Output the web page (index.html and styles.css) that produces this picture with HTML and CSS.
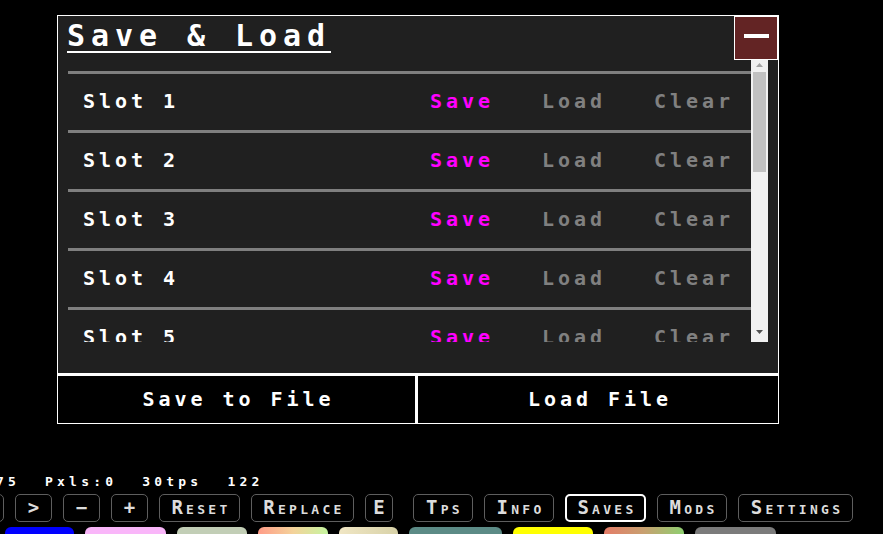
FILE: index.html
```html
<!DOCTYPE html>
<html lang="en">
<head>
    <meta charset="UTF-8">
    <meta name="viewport" content="width=device-width, initial-scale=1.0">
    <title>Save &amp; Load</title>
    <link rel="stylesheet" href="styles.css">
</head>
<body>

<div class="modal">
    <div class="modal-head">
        <h2 class="modal-title"><span>Save &amp; Load</span></h2>
        <button class="close-btn" title="Close"><span class="close-bar"></span></button>
    </div>

    <div class="slots-wrap">
        <div class="slots">
            <div class="slot"><span class="slot-name">Slot 1</span><span class="slot-save">Save</span><span class="slot-act">Load</span><span class="slot-act">Clear</span></div>
            <div class="slot"><span class="slot-name">Slot 2</span><span class="slot-save">Save</span><span class="slot-act">Load</span><span class="slot-act">Clear</span></div>
            <div class="slot"><span class="slot-name">Slot 3</span><span class="slot-save">Save</span><span class="slot-act">Load</span><span class="slot-act">Clear</span></div>
            <div class="slot"><span class="slot-name">Slot 4</span><span class="slot-save">Save</span><span class="slot-act">Load</span><span class="slot-act">Clear</span></div>
            <div class="slot"><span class="slot-name">Slot 5</span><span class="slot-save">Save</span><span class="slot-act">Load</span><span class="slot-act">Clear</span></div>
            <div class="slot"><span class="slot-name">Slot 6</span><span class="slot-save">Save</span><span class="slot-act">Load</span><span class="slot-act">Clear</span></div>
            <div class="slot"><span class="slot-name">Slot 7</span><span class="slot-save">Save</span><span class="slot-act">Load</span><span class="slot-act">Clear</span></div>
        </div>
        <div class="scrollbar">
            <div class="sb-up">
                <svg width="7" height="4" viewBox="0 0 7 4"><polygon points="0,4 3.5,0 7,4" fill="#a3a3a3"/></svg>
            </div>
            <div class="sb-thumb"></div>
            <div class="sb-down">
                <svg width="7" height="4" viewBox="0 0 7 4"><polygon points="0,0 7,0 3.5,4" fill="#505050"/></svg>
            </div>
        </div>
    </div>

    <div class="modal-foot">
        <button class="file-btn">Save to File</button>
        <button class="file-btn">Load File</button>
    </div>
</div>

<div class="stats">
    <span class="stat">75</span>
    <span class="stat">Pxls:0</span>
    <span class="stat">30tps</span>
    <span class="stat">122</span>
</div>

<div class="toolbar">
    <button class="tool-btn w-sm">&lt;</button>
    <button class="tool-btn w-sm">&gt;</button>
    <button class="tool-btn w-sm">−</button>
    <button class="tool-btn w-sm">+</button>
    <button class="tool-btn w-reset">Reset</button>
    <button class="tool-btn w-replace">Replace</button>
    <button class="tool-btn w-e">E</button>
    <button class="tool-btn w-tps">Tps</button>
    <button class="tool-btn w-info">Info</button>
    <button class="tool-btn w-saves active">Saves</button>
    <button class="tool-btn w-mods">Mods</button>
    <button class="tool-btn w-settings">Settings</button>
</div>

<div class="categories">
    <div class="cat cat-blue"></div>
    <div class="cat cat-pink"></div>
    <div class="cat cat-sage"></div>
    <div class="cat cat-warm"></div>
    <div class="cat cat-beige"></div>
    <div class="cat cat-teal"></div>
    <div class="cat cat-yellow"></div>
    <div class="cat cat-rust"></div>
    <div class="cat cat-gray"></div>
</div>

</body>
</html>
```

FILE: styles.css
```css
html, body {
    overflow: hidden;
}

body {
    margin: 0;
    background: #000;
    color: #fff;
    font-family: 'DejaVu Sans Mono', 'Liberation Mono', monospace;
    font-weight: bold;
}

button {
    font-family: inherit;
    font-weight: bold;
    background: none;
    border: none;
    padding: 0;
    margin: 0;
    cursor: pointer;
}

/* save / load panel */
.modal {
    box-sizing: border-box;
    width: 722px;
    height: 409px;
    margin: 15px 0 0 57px;
    border: 1px solid #fff;
    background: #202020;
    display: flex;
    flex-direction: column;
}

.modal-head {
    display: flex;
    justify-content: space-between;
    align-items: flex-start;
    height: 44px;
}

.modal-title {
    margin: 0;
    padding: 5px 0 0 9px;
    font-size: 30px;
    font-weight: bold;
    letter-spacing: 5.94px;
    line-height: 30px;
}

.modal-title span {
    display: inline-block;
    border-bottom: 2px solid #fff;
}

.close-btn {
    box-sizing: border-box;
    width: 44px;
    height: 44px;
    background: #632424;
    border: 1px solid #fff;
    display: flex;
    align-items: center;
    justify-content: center;
    padding-bottom: 4px;
}

.close-bar {
    width: 25px;
    height: 4px;
    background: #fff;
}

.slots-wrap {
    display: flex;
    height: 282px;
    padding: 0 10px;
}

.slots {
    flex: 1;
    overflow: hidden;
    padding-top: 11px;
}

.slot {
    box-sizing: border-box;
    display: flex;
    align-items: center;
    gap: 48px;
    height: 59px;
    border-top: 3px solid #7f7f7f;
    padding: 0 17px 3px 15px;
    font-size: 20px;
    letter-spacing: 3.96px;
}

.slot-name {
    flex: 1;
    color: #fff;
}

.slot-save {
    color: #ff00ff;
}

.slot-act {
    color: #808080;
}

.scrollbar {
    width: 17px;
    background: #f1f1f1;
    display: flex;
    flex-direction: column;
}

.sb-up {
    height: 12px;
    display: flex;
    align-items: center;
    justify-content: center;
    padding-bottom: 3px;
    box-sizing: border-box;
}

.sb-thumb {
    height: 100px;
    margin: 0 2px;
    background: #c1c1c1;
}

.sb-down {
    margin-top: auto;
    height: 17px;
    display: flex;
    align-items: center;
    justify-content: center;
    padding-bottom: 3px;
    box-sizing: border-box;
}

.modal-foot {
    display: flex;
    margin-top: 31px;
    height: 50px;
    border-top: 3px solid #fff;
    box-sizing: border-box;
}

.file-btn {
    color: #fff;
    background: #000;
    font-size: 20px;
    letter-spacing: 3.96px;
    padding: 0 0 2px 4px;
}

.file-btn:first-child {
    width: 357px;
}

.file-btn:last-child {
    flex: 1;
    border-left: 3px solid #fff;
}

/* bottom game ui */
.stats {
    display: flex;
    gap: 25px;
    margin: 50px 0 0 -4px;
    font-size: 13px;
    letter-spacing: 4.2px;
    line-height: 15px;
    white-space: nowrap;
}

.toolbar {
    display: flex;
    gap: 11px;
    margin: 5px 0 0 -33px;
}

.tool-btn {
    flex-shrink: 0;
    box-sizing: border-box;
    height: 28px;
    border: 1px solid #5e5e5e;
    border-radius: 5px;
    color: #dcdcdc;
    font-size: 19px;
    font-variant: small-caps;
    letter-spacing: 3.3px;
    padding: 0 0 3px 3px;
    white-space: nowrap;
}

.tool-btn.active {
    border: 2px solid #fff;
}

.w-sm { width: 37px; }
.w-reset { width: 81px; }
.w-replace { width: 103px; }
.w-e { width: 28px; }
.w-tps { width: 60px; margin-left: 9px; }
.w-info { width: 70px; }
.w-saves { width: 81px; }
.w-mods { width: 70px; }
.w-settings { width: 115px; }

.categories {
    display: flex;
    gap: 11px;
    margin: 5px 0 0 5px;
}

.cat {
    flex-shrink: 0;
    height: 30px;
    border-radius: 6px 6px 0 0;
}

.cat-blue { width: 69px; background: #0000ff; }
.cat-pink { width: 81px; background: #f9b6f9; }
.cat-sage { width: 70px; background: #c2ceb6; }
.cat-warm { width: 70px; background: linear-gradient(to right, #ff9c88, #f4d29a, #c6f5a0); }
.cat-beige { width: 59px; background: linear-gradient(to right, #f0e6c4, #d8d2a8); }
.cat-teal { width: 93px; background: #5c8b86; }
.cat-yellow { width: 80px; background: #ffff00; }
.cat-rust { width: 80px; background: linear-gradient(to right, #e47c68, #c8a070, #8ecf70); }
.cat-gray { width: 81px; background: #7b7b7b; }
```
